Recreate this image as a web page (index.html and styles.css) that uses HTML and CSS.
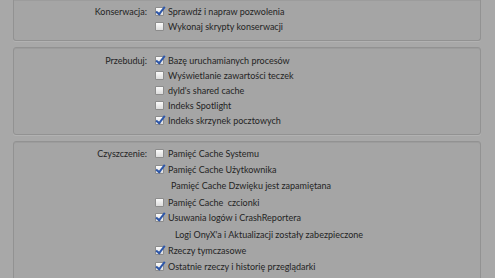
FILE: index.html
```html
<!DOCTYPE html>
<html>
<head>
	<title>OnyX - Automatyzacja</title>
	<link rel="stylesheet" href="styles.css">
</head>
<body>
	<div class="panel">
		<div class="group first">
			<div class="row"><span class="label">Konserwacja:</span><span class="box on"></span><span class="text">Sprawdź i napraw pozwolenia</span></div>
			<div class="row"><span class="label"></span><span class="box"></span><span class="text">Wykonaj skrypty konserwacji</span></div>
		</div>

		<div class="group">
			<div class="row"><span class="label">Przebuduj:</span><span class="box on"></span><span class="text">Bazę uruchamianych procesów</span></div>
			<div class="row"><span class="label"></span><span class="box"></span><span class="text">Wyświetlanie zawartości teczek</span></div>
			<div class="row"><span class="label"></span><span class="box"></span><span class="text">dyld's shared cache</span></div>
			<div class="row"><span class="label"></span><span class="box"></span><span class="text">Indeks Spotlight</span></div>
			<div class="row"><span class="label"></span><span class="box on"></span><span class="text">Indeks skrzynek pocztowych</span></div>
		</div>

		<div class="group tall">
			<div class="row"><span class="label">Czyszczenie:</span><span class="box"></span><span class="text">Pamięć Cache Systemu</span></div>
			<div class="row"><span class="label"></span><span class="box on"></span><span class="text">Pamięć Cache Użytkownika</span></div>
			<div class="note">Pamięć Cache Dzwięku jest zapamiętana</div>
			<div class="row"><span class="label"></span><span class="box"></span><span class="text">Pamięć Cache &nbsp;czcionki</span></div>
			<div class="row"><span class="label"></span><span class="box on"></span><span class="text">Usuwania logów i CrashReportera</span></div>
			<div class="note wide">Logi OnyX'a i Aktualizacji zostały zabezpieczone</div>
			<div class="row"><span class="label"></span><span class="box on"></span><span class="text">Rzeczy tymczasowe</span></div>
			<div class="row"><span class="label"></span><span class="box on"></span><span class="text">Ostatnie rzeczy i historię przeglądarki</span></div>
		</div>
	</div>
</body>
</html>
```

FILE: styles.css
```css
body {
	margin: 0;
	padding: 0;
	background-color: #a8a8a8;
	font-family: Lato, sans-serif;
	font-size: 9px;
	color: #242424;
	overflow: hidden;
}

.panel {
	padding: 0 14px 0 13px;
	height: 278px;
}

.group {
	background-color: #a5a5a5;
	border: 1px solid #929292;
	border-radius: 3px;
	box-shadow: inset 0 1px 0 #9c9c9c, 0 1px 0 #b2b2b2;
	padding: 5px 0 6px 0;
	margin-bottom: 6px;
}

.group.first {
	border-top: none;
	border-radius: 0 0 3px 3px;
	padding-top: 4px;
}

.group.tall {
	padding-top: 4px;
}

.row {
	display: flex;
	align-items: center;
	height: 15px;
}

.tall .row {
	height: 15.5px;
}

.label {
	width: 133px;
	text-align: right;
	flex-shrink: 0;
}

.box {
	box-sizing: border-box;
	width: 9px;
	height: 9px;
	margin-left: 8px;
	margin-right: 4px;
	background: linear-gradient(#fbfbfb, #dcdcdc);
	border: 1px solid #8c8c8c;
	border-radius: 1px;
	position: relative;
	flex-shrink: 0;
}

.box.on::after {
	content: "";
	position: absolute;
	left: 2px;
	top: -3px;
	width: 3px;
	height: 8px;
	border-right: 2px solid #2d56a8;
	border-bottom: 2px solid #2d56a8;
	transform: rotate(38deg);
}

.note {
	height: 17.5px;
	line-height: 17.5px;
	padding-left: 157px;
}

.note.wide {
	padding-left: 161px;
}
```
